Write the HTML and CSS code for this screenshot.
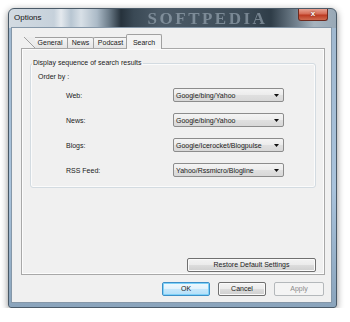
FILE: index.html
```html
<!doctype html>
<html>

<head>
    <title>Options</title>
    <link rel="stylesheet" href="styles.css">
</head>

<body>
    <div class="window">
        <div class="titlebar">
            <span class="title">Options</span>
            <span class="watermark">SOFTPEDIA</span>
            <div class="closeBtn">x</div>
        </div>

        <div class="client">
            <!-- Tab strip -->
            <div class="tabs">
                <span class="slant"></span>
                <div class="tab first">General</div>
                <div class="tab news">News</div>
                <div class="tab podcast">Podcast</div>
                <div class="tab active">Search</div>
            </div>

            <div class="tabPanel">
                <fieldset class="group">
                    <legend>Display sequence of search results</legend>
                    <div class="orderBy">Order by :</div>
                    <div class="row">
                        <span class="label">Web:</span>
                        <div class="combo"><span>Google/bing/Yahoo</span><svg width="5" height="3" viewBox="0 0 5 3"><path d="M0 0H5L2.5 3Z" fill="#111"/></svg></div>
                    </div>
                    <div class="row">
                        <span class="label">News:</span>
                        <div class="combo"><span>Google/bing/Yahoo</span><svg width="5" height="3" viewBox="0 0 5 3"><path d="M0 0H5L2.5 3Z" fill="#111"/></svg></div>
                    </div>
                    <div class="row">
                        <span class="label">Blogs:</span>
                        <div class="combo"><span>Google/Icerocket/Blogpulse</span><svg width="5" height="3" viewBox="0 0 5 3"><path d="M0 0H5L2.5 3Z" fill="#111"/></svg></div>
                    </div>
                    <div class="row">
                        <span class="label">RSS Feed:</span>
                        <div class="combo"><span>Yahoo/Rssmicro/Blogline</span><svg width="5" height="3" viewBox="0 0 5 3"><path d="M0 0H5L2.5 3Z" fill="#111"/></svg></div>
                    </div>
                </fieldset>
                <button class="btn restore">Restore Default Settings</button>
            </div>

            <!-- Dialog buttons -->
            <div class="buttons">
                <button class="btn default">OK</button>
                <button class="btn cancel">Cancel</button>
                <button class="btn apply" disabled>Apply</button>
            </div>
        </div>
    </div>
</body>
</html>
```

FILE: styles.css
```css
body {
    margin: 0;
    padding: 8px 0 0 8px;
    background: white;
    font-family: "Liberation Sans", Arial, sans-serif;
    font-size: 7px;
    color: #1a1a1a;
}

/* Window frame */
.window {
    width: 329px;
    height: 300px;
    box-sizing: border-box;
    border: 1px solid #4a5a68;
    border-radius: 6px 6px 3px 3px;
    padding: 0 5px 5px 3px;
    display: flex;
    flex-direction: column;
    background:
        linear-gradient(to right, #d3dbe2 0, #c6d1db 45px, #e4e9ee 52px, #b8c6d2 62px, #d8e0e7 72px, #abbac7 88px, #6d7d8a 100px, #26323c 112px, #3a4955 125px, #4b5a67 150px, #3e4d59 230px, #2f3d48 262px, #7a8996 290px, #a7b4bf 305px, #98a8b6 327px) 0 0 / 100% 19px no-repeat,
        linear-gradient(to bottom, #9fb7ce 0, #a9c3dc 60%, #8aa4bc 100%);
    box-shadow: 0 2px 7px rgba(0, 0, 0, 0.45);
}

.titlebar {
    height: 19px;
    display: flex;
    align-items: flex-start;
}

.title {
    font-size: 8px;
    color: #111;
    margin: 4px 0 0 2px;
}

.watermark {
    font-family: "Liberation Serif", serif;
    font-weight: bold;
    font-size: 17px;
    letter-spacing: 2.5px;
    color: rgba(180, 194, 206, 0.5);
    margin: 1px 0 0 106px;
    line-height: 17px;
    filter: blur(0.6px);
}

.closeBtn {
    margin-left: auto;
    margin-right: 3px;
    width: 30px;
    height: 12px;
    box-sizing: border-box;
    border: 1px solid #6e2a1f;
    border-top: none;
    border-radius: 0 0 3px 3px;
    background: linear-gradient(to bottom, #e7a394 0, #d56b55 45%, #bc3a22 55%, #cf6a4f 100%);
    color: white;
    font-weight: bold;
    font-size: 8px;
    line-height: 10px;
    text-align: center;
    text-shadow: 0 0 2px #5a1408;
}

/* Client area */
.client {
    flex: 1;
    background: #f0f0f0;
    box-shadow: 0 0 0 1px #8597a8;
    padding: 6px 6px 6px 9px;
    display: flex;
    flex-direction: column;
}

.tabs {
    height: 14px;
    display: flex;
    align-items: flex-end;
    padding-left: 3px;
    position: relative;
    z-index: 1;
}

.slant {
    width: 11px;
    height: 11px;
    background: linear-gradient(to top right, transparent calc(50% - 0.7px), #a0a0a0 calc(50% - 0.7px), #a0a0a0 calc(50% + 0.7px), #ececec calc(50% + 0.7px));
}

.tab {
    height: 11px;
    box-sizing: border-box;
    border: 1px solid #a0a0a0;
    border-bottom: none;
    border-radius: 2px 2px 0 0;
    background: linear-gradient(to bottom, #f6f6f6, #e4e4e4);
    line-height: 10px;
    text-align: center;
    margin-left: -1px;
}

.tab.first {
    width: 33px;
    border-left: none;
    border-radius: 0 2px 0 0;
    padding-right: 2px;
    margin-left: 0;
}

.tab.news {
    width: 27px;
}

.tab.podcast {
    width: 35px;
}

.tab.active {
    width: 36px;
    height: 15px;
    margin-bottom: -1px;
    margin-left: -2px;
    padding-top: 3px;
    background: #f3f3f3;
}

.tabPanel {
    flex: 1;
    border: 1px solid #a8a8a8;
    box-shadow: inset 0 0 0 1px #fcfcfc;
    display: flex;
    flex-direction: column;
    padding: 9px 0 1px 0;
}

/* Group box */
.group {
    margin: 0 8px;
    min-width: 0;
    border: 1px solid #d3dbe1;
    border-radius: 3px;
    box-shadow: inset 0 0 0 1px #fbfbfb;
    padding: 4px 0 10px 0;
}

.group legend {
    line-height: 10px;
    padding: 0 1px;
    margin-left: 1px;
}

.orderBy {
    line-height: 10px;
    margin: 0 0 6px 7px;
}

.row {
    display: flex;
    align-items: center;
    height: 14px;
    margin-bottom: 11px;
    padding-left: 35px;
}

.row:last-child {
    margin-bottom: 0;
}

.label {
    width: 107px;
}

.combo {
    width: 111px;
    height: 14px;
    box-sizing: border-box;
    border: 1px solid #8c8c8c;
    border-radius: 2px;
    background: linear-gradient(to bottom, #f4f4f4 0, #ececec 50%, #e0e0e0 50%, #d8d8d8 100%);
    display: flex;
    align-items: center;
    padding-left: 2px;
}

.combo svg {
    margin-left: auto;
    margin-right: 4px;
}

/* Buttons */
.btn {
    font-family: inherit;
    font-size: 7px;
    color: #1a1a1a;
    height: 14px;
    line-height: 12px;
    padding: 0;
    box-sizing: border-box;
    border: 1px solid #707070;
    border-radius: 2px;
    background: linear-gradient(to bottom, #f3f3f3 0, #ebebeb 50%, #dddddd 50%, #cfcfcf 100%);
    box-shadow: inset 0 0 0 1px #fafafa;
}

.restore {
    width: 129px;
    margin: auto 8px 1px 0;
    align-self: flex-end;
}

.buttons {
    display: flex;
    justify-content: flex-end;
    gap: 8px;
    margin: 7px 1px 0 0;
}

.buttons .btn {
    width: 48px;
}

.btn.default {
    border-color: #3c8fc8;
    background: linear-gradient(to bottom, #f0f9fe 0, #e1f2fc 50%, #c6e8fb 50%, #b4def8 100%);
    box-shadow: inset 0 0 0 1px #7fd2f8;
}

.btn.apply {
    width: 50px;
    border-color: #b4b8bb;
    background: #f4f4f4;
    color: #8a8a8a;
    box-shadow: none;
}
```
